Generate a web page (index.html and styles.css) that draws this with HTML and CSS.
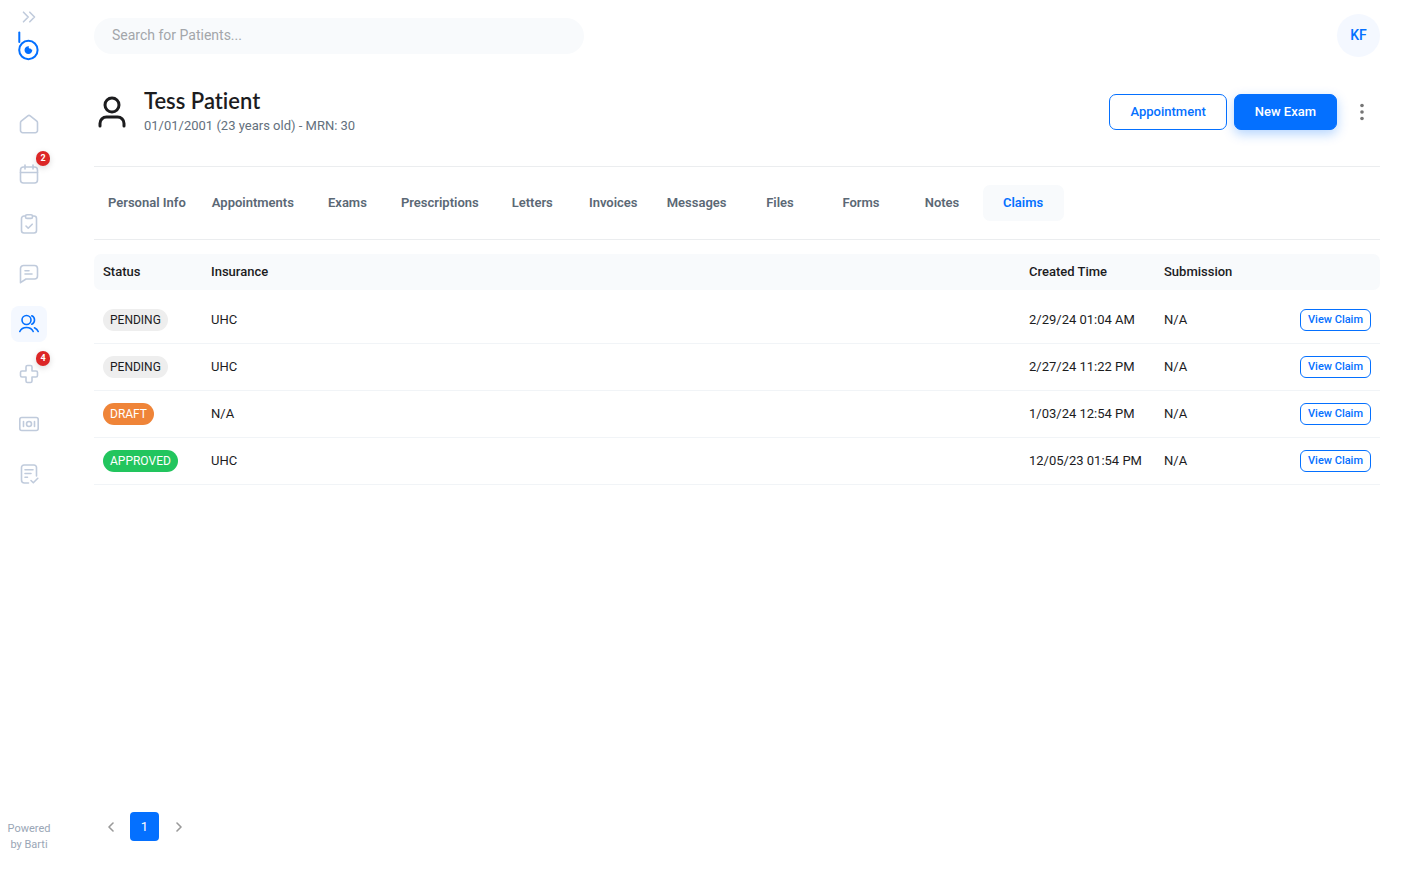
FILE: index.html
```html
<!DOCTYPE html>
<html lang="en">
<head>
    <meta charset="UTF-8">
    <meta name="viewport" content="width=device-width, initial-scale=1">
    <title>Tess Patient - Claims</title>
    <link rel="stylesheet" href="styles.css">
</head>
<body>
    <aside class="sidebar">
        <button class="expand" aria-label="Expand menu">
            <svg width="14" height="12" viewBox="0 0 14 12"><path d="M1.5 1.2 6.2 6 1.5 10.8M7.8 1.2 12.5 6 7.8 10.8"/></svg>
        </button>
        <a href="#" class="logo" aria-label="Home">
            <svg width="22" height="30" viewBox="0 0 22 30">
                <path d="M1.3 1.5v9.500" stroke-width="2"/>
                <circle cx="10.4" cy="19" r="9.2" stroke-width="2"/>
                <path class="pupil" d="M11 15.200a3.900 3.900 0 1 0 3.300 3.600 1.500 1.500 0 0 1-1.500-1.300 1.500 1.500 0 0 1-1.800-2.300z"/>
            </svg>
        </a>
        <nav class="menu">
            <a href="#" aria-label="Dashboard">
                <svg width="20" height="20" viewBox="0 0 20 20"><path d="M2.200 7.200 8.800 1.800a2 2 0 0 1 2.400 0l6.600 5.400a2 2 0 0 1 .7 1.500v7.800a2.200 2.200 0 0 1-2.200 2.200H3.700a2.200 2.200 0 0 1-2.200-2.200V8.700a2 2 0 0 1 .7-1.500z"/></svg>
            </a>
            <a href="#" aria-label="Calendar">
                <svg width="20" height="20" viewBox="0 0 20 20"><rect x="1.5" y="3" width="17" height="16" rx="3"/><path d="M1.5 8.500h17M6 1v4M14 1v4"/></svg>
                <span class="badge">2</span>
            </a>
            <a href="#" aria-label="Tasks">
                <svg width="20" height="20" viewBox="0 0 20 20"><path d="M6.5 2H5a2.500 2.500 0 0 0-2.500 2.500v12A2.500 2.500 0 0 0 5 19h10a2.500 2.500 0 0 0 2.500-2.500v-12A2.500 2.500 0 0 0 15 2h-1.500"/><rect x="6.500" y=".8" width="7" height="3.600" rx="1.500"/><path d="m7 12 2.200 2.200 4-4"/></svg>
            </a>
            <a href="#" aria-label="Messages">
                <svg width="20" height="20" viewBox="0 0 20 20"><path d="M4.500 1.500h11a3 3 0 0 1 3 3V12a3 3 0 0 1-3 3H7l-5.500 3.700V4.500a3 3 0 0 1 3-3z"/><path d="M6 6.800h4M6 10h7"/></svg>
            </a>
            <a href="#" class="active" aria-label="Patients">
                <svg width="20" height="20" viewBox="0 0 20 20"><circle cx="7.500" cy="6" r="4.500"/><path d="M12.800 1.800c3.600 1.500 3.600 6.900 0 8.400M.8 17.500c1.200-2.600 3.700-4 6.700-4s5.500 1.400 6.700 4M15.500 13.800c1.700.8 3 2 3.700 3.700"/></svg>
            </a>
            <a href="#" aria-label="Inventory">
                <svg width="20" height="20" viewBox="0 0 20 20"><path d="M8.500 1.500h3a1.500 1.500 0 0 1 1.500 1.500v4h4a1.500 1.500 0 0 1 1.500 1.500v3A1.500 1.500 0 0 1 17 13h-4v4a1.500 1.500 0 0 1-1.500 1.500h-3A1.500 1.500 0 0 1 7 17v-4H3a1.500 1.500 0 0 1-1.500-1.500v-3A1.500 1.500 0 0 1 3 7h4V3a1.500 1.500 0 0 1 1.500-1.500z"/></svg>
                <span class="badge">4</span>
            </a>
            <a href="#" aria-label="Payments">
                <svg width="20" height="20" viewBox="0 0 20 20"><rect x=".8" y="3.500" width="18.400" height="13" rx="2"/><circle cx="10" cy="10" r="2.500"/><path d="M4.500 7.500v5M15.500 7.500v5"/></svg>
            </a>
            <a href="#" aria-label="Claims">
                <svg width="20" height="20" viewBox="0 0 20 20"><path d="M9.500 19H5.500a3 3 0 0 1-3-3V3.500a2.500 2.500 0 0 1 2.500-2.500h10a2.500 2.500 0 0 1 2.500 2.500V12M6 5.800h8M6 9.500h6M6 13.200h2.500M12 16.500l2.300 2.300 4.500-4.500"/></svg>
            </a>
        </nav>
        <p class="powered">Powered<br>by Barti</p>
    </aside>

    <main>
        <header class="topbar">
            <input type="search" class="search" placeholder="Search for Patients..." aria-label="Search for Patients">
            <button class="avatar">KF</button>
        </header>

        <section class="patient">
            <svg class="person" width="36" height="36" viewBox="0 0 36 36"><circle cx="18" cy="11" r="7"/><path d="M6 32v-2.500a6.500 6.500 0 0 1 6.500-6.500h11a6.500 6.500 0 0 1 6.500 6.500V32"/></svg>
            <div class="patient-info">
                <h1>Tess Patient</h1>
                <p>01/01/2001 (23 years old) - MRN: 30</p>
            </div>
            <div class="actions">
                <button class="btn outline">Appointment</button>
                <button class="btn primary">New Exam</button>
                <button class="more" aria-label="More">
                    <svg width="4" height="18" viewBox="0 0 4 18"><circle cx="2" cy="2.500" r="1.800"/><circle cx="2" cy="9" r="1.800"/><circle cx="2" cy="15.500" r="1.800"/></svg>
                </button>
            </div>
        </section>

        <nav class="tabs">
            <a href="#">Personal Info</a>
            <a href="#">Appointments</a>
            <a href="#">Exams</a>
            <a href="#">Prescriptions</a>
            <a href="#">Letters</a>
            <a href="#">Invoices</a>
            <a href="#">Messages</a>
            <a href="#">Files</a>
            <a href="#">Forms</a>
            <a href="#">Notes</a>
            <a href="#" class="active">Claims</a>
        </nav>

        <table class="claims">
            <thead>
                <tr>
                    <th class="col-status">Status</th>
                    <th>Insurance</th>
                    <th class="col-created">Created Time</th>
                    <th class="col-submission">Submission</th>
                    <td class="col-action"></td>
                </tr>
            </thead>
            <tbody>
                <tr>
                    <td><span class="pill">PENDING</span></td>
                    <td>UHC</td>
                    <td>2/29/24 01:04 AM</td>
                    <td>N/A</td>
                    <td class="col-action"><button class="view">View Claim</button></td>
                </tr>
                <tr>
                    <td><span class="pill">PENDING</span></td>
                    <td>UHC</td>
                    <td>2/27/24 11:22 PM</td>
                    <td>N/A</td>
                    <td class="col-action"><button class="view">View Claim</button></td>
                </tr>
                <tr>
                    <td><span class="pill draft">DRAFT</span></td>
                    <td>N/A</td>
                    <td>1/03/24 12:54 PM</td>
                    <td>N/A</td>
                    <td class="col-action"><button class="view">View Claim</button></td>
                </tr>
                <tr>
                    <td><span class="pill approved">APPROVED</span></td>
                    <td>UHC</td>
                    <td>12/05/23 01:54 PM</td>
                    <td>N/A</td>
                    <td class="col-action"><button class="view">View Claim</button></td>
                </tr>
            </tbody>
        </table>

        <nav class="pagination" aria-label="Pages">
            <button aria-label="Previous page"><svg width="8" height="10" viewBox="0 0 8 10"><path d="M6 1 2 5l4 4"/></svg></button>
            <button class="current">1</button>
            <button aria-label="Next page"><svg width="8" height="10" viewBox="0 0 8 10"><path d="m2 1 4 4-4 4"/></svg></button>
        </nav>
    </main>
</body>
</html>
```
FILE: styles.css
```css
* {
    box-sizing: border-box;
}
body {
    margin: 0;
    display: flex;
    min-height: 100vh;
    font-family: Roboto, sans-serif;
    font-size: 13px;
    color: #1c1c1e;
    background: #fff;
}
a {
    text-decoration: none;
}
button {
    font-family: inherit;
    padding: 0;
    border: none;
    background: none;
    cursor: pointer;
}
svg {
    display: block;
    fill: none;
    stroke: currentColor;
    stroke-width: 1.6;
    stroke-linecap: round;
    stroke-linejoin: round;
}

/* Sidebar */
.sidebar {
    width: 58px;
    flex-shrink: 0;
    display: flex;
    flex-direction: column;
    align-items: center;
    padding: 11px 0 33px;
    color: #c0cbdc;
}
.expand {
    color: inherit;
}
.logo {
    margin-top: 8px;
    color: #0470ff;
}
.logo .pupil {
    fill: currentColor;
    stroke: none;
}
.menu {
    display: flex;
    flex-direction: column;
    gap: 14px;
    margin-top: 45px;
}
.menu a {
    position: relative;
    display: flex;
    align-items: center;
    justify-content: center;
    width: 36px;
    height: 36px;
    border-radius: 8px;
    color: inherit;
}
.menu a.active {
    color: #0470ff;
    background: #f4f8ff;
}
.badge {
    position: absolute;
    top: -5px;
    right: -3px;
    width: 14px;
    height: 15px;
    border-radius: 8px;
    background: #dc2626;
    color: #fff;
    font-size: 9px;
    font-weight: 700;
    line-height: 15px;
    text-align: center;
    box-shadow: 0 2px 6px rgba(0, 0, 0, 0.15);
}
.powered {
    margin: auto 0 0;
    font-size: 11px;
    line-height: 16px;
    text-align: center;
    color: #9aa6b6;
}

/* Main */
main {
    flex: 1;
    min-width: 0;
    display: flex;
    flex-direction: column;
    padding: 14px 36px 45px;
}
.topbar {
    display: flex;
    align-items: center;
    justify-content: space-between;
}
.search {
    width: 490px;
    height: 36px;
    padding: 0 18px 2px;
    border: none;
    border-radius: 18px;
    background: #f8fafc;
    font-family: inherit;
    font-size: 14px;
}
.search::placeholder {
    color: #a3a6aa;
}
.avatar {
    width: 43px;
    height: 43px;
    padding-bottom: 1px;
    border-radius: 50%;
    background: #f4f8ff;
    color: #0470ff;
    font-size: 14px;
    font-weight: 500;
}
.patient {
    display: flex;
    align-items: center;
    height: 110px;
    border-bottom: 1px solid #ebedef;
}
.person {
    stroke-width: 3;
}
.patient-info {
    margin-left: 14px;
}
.patient h1 {
    margin: 0;
    font-family: Lato, sans-serif;
    font-size: 22px;
    font-weight: 600;
    font-variant-ligatures: none;
    line-height: 28px;
}
.patient p {
    margin: 0;
    line-height: 22px;
    color: #64707d;
}
.actions {
    display: flex;
    align-items: center;
    gap: 7px;
    margin-left: auto;
}
.btn {
    height: 36px;
    padding: 0 20px;
    border: 1px solid #0470ff;
    border-radius: 7px;
    font-size: 13px;
    font-weight: 500;
}
.outline {
    color: #0470ff;
    background: #fff;
}
.primary {
    color: #fff;
    background: #0470ff;
    box-shadow: 0 4px 12px rgba(4, 112, 255, 0.3);
}
.more {
    display: flex;
    justify-content: center;
    width: 36px;
    color: #757575;
}
.more svg {
    fill: currentColor;
    stroke: none;
}

.tabs {
    display: flex;
    padding: 18px 1px;
    border-bottom: 1px solid #ebedef;
}
.tabs a {
    min-width: 81px;
    padding: 0 13px;
    border-radius: 7px;
    line-height: 36px;
    font-weight: 600;
    text-align: center;
    color: #5b6875;
}
.tabs a.active {
    color: #0470ff;
    background: #f8fafc;
}

/* Claims table */
.claims {
    width: 100%;
    margin-top: 14px;
    table-layout: fixed;
    border-spacing: 0;
    text-align: left;
}
.claims th,
.claims td {
    padding: 0 9px 1px;
}
.claims th {
    font-weight: 500;
}
.claims thead tr > * {
    height: 36px;
    background: #f8fafc;
}
.claims thead tr > :first-child {
    border-radius: 7px 0 0 7px;
}
.claims thead tr > :last-child {
    border-radius: 0 7px 7px 0;
}
.claims tbody::before {
    content: "";
    display: block;
    height: 7px;
}
.claims tbody td {
    height: 47px;
    border-bottom: 1px solid #f1f4f7;
}
.col-status {
    width: 108px;
}
.col-created {
    width: 135px;
}
.col-submission {
    width: 136px;
}
.col-action {
    width: 89px;
    text-align: right;
}
.pill {
    display: inline-block;
    padding: 0 7px;
    border-radius: 11px;
    background: #eee;
    font-size: 12px;
    line-height: 22px;
}
.pill.draft {
    background: #ef8438;
    color: #fff;
}
.pill.approved {
    background: #22c55e;
    color: #fff;
}
.claims .view {
    height: 22px;
    padding: 0 7px 1px;
    border: 1px solid #0470ff;
    border-radius: 6px;
    color: #0470ff;
    font-size: 11px;
    font-weight: 500;
    white-space: nowrap;
}

.pagination {
    display: flex;
    align-items: center;
    gap: 5px;
    margin-top: auto;
    padding-left: 2px;
}
.pagination button {
    display: flex;
    align-items: center;
    justify-content: center;
    width: 29px;
    height: 29px;
    border-radius: 4px;
    color: #9a9a9a;
    font-size: 13px;
}
.pagination .current {
    background: #0470ff;
    color: #fff;
}
```
